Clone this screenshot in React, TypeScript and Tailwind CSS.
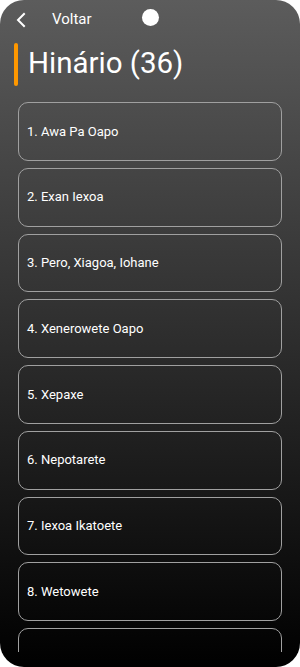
import React from "react";

const hymns = [
  "1. Awa Pa Oapo",
  "2. Exan Iexoa",
  "3. Pero, Xiagoa, Iohane",
  "4. Xenerowete Oapo",
  "5. Xepaxe",
  "6. Nepotarete",
  "7. Iexoa Ikatoete",
  "8. Wetowete",
  "9. Wanarowete Oapo",
  "10. Xinano",
];

export default function App() {
  return (
    <div className="w-[300px] h-[667px] bg-white" style={{ fontFamily: "Roboto, 'Noto Sans', sans-serif" }}>
      <div className="w-full h-full rounded-[24px] overflow-hidden bg-[linear-gradient(to_bottom,#5c5c5c,#000000)] flex flex-col pb-[15px]">
        <div className="h-[38px] flex items-center relative shrink-0">
          <svg className="ml-[15px] mt-[1px]" width="12" height="16" viewBox="0 0 12 16" fill="none">
            <path d="M9 2 L3 8 L9 14" stroke="white" strokeWidth="2" strokeLinecap="square" />
          </svg>
          <span className="ml-[25px] text-[15px] text-white">Voltar</span>
          <div className="absolute left-[142px] top-[9px] w-[17px] h-[17px] rounded-full bg-white" />
        </div>
        <div className="flex items-center h-[44px] mt-[4px] shrink-0">
          <div className="ml-[14px] w-[4px] h-[43px] rounded-full bg-[#ff9800]" />
          <span className="ml-[10px] text-[29.5px] text-white leading-none">Hinário (36)</span>
        </div>
        <div className="flex-1 overflow-hidden mt-[16px] px-[18px] flex flex-col gap-[7px]">
          {hymns.map((h) => (
            <div
              key={h}
              className="h-[58.75px] shrink-0 rounded-[10px] border-[1.5px] border-[#a0a0a0] flex items-center px-[8px] text-[13px] text-white"
            >
              {h}
            </div>
          ))}
        </div>
      </div>
    </div>
  );
}
